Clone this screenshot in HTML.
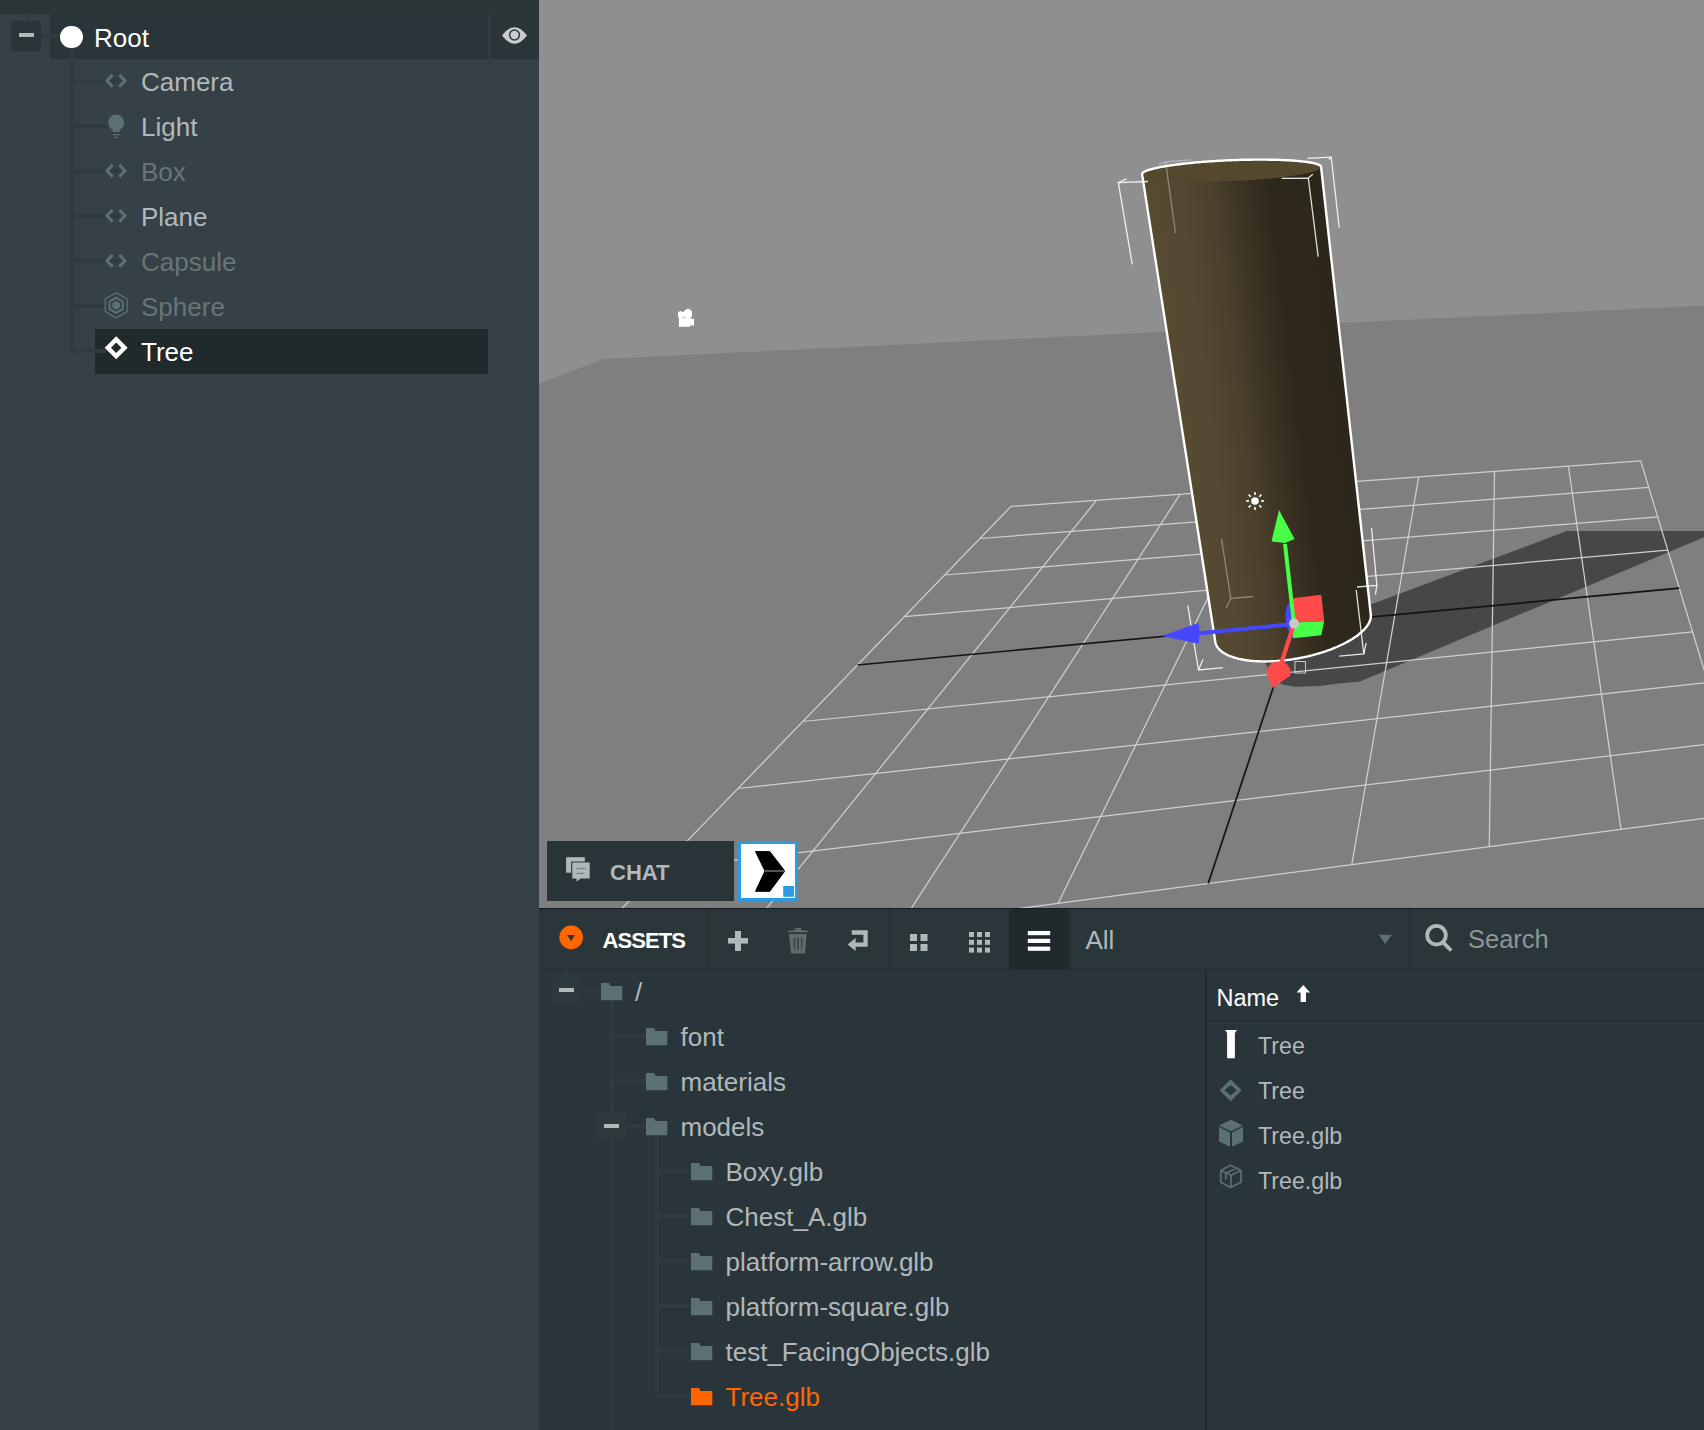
<!DOCTYPE html>
<html><head><meta charset="utf-8">
<style>
*{box-sizing:border-box}
html,body{margin:0;padding:0;width:1704px;height:1430px;overflow:hidden;background:#2a3539;font-family:"Liberation Sans",sans-serif}
.a{position:absolute}
#hier{left:0;top:0;width:539px;height:1430px;background:#354146}
.t{position:absolute;font-size:26px;line-height:30px;white-space:pre;color:#b1b8ba}
.ln{position:absolute;background:#2f3b40}
.vp{position:absolute;left:539px;top:0}
#assets{left:539px;top:908px;width:1165px;height:522px;background:#29353a}
</style></head><body>
<div id="hier" class="a">
  <div class="a" style="left:0;top:0;width:539px;height:14px;background:#2a3538"></div>
  <div class="a" style="left:50px;top:14px;width:489px;height:45px;background:#2a3539"></div>
  <div class="a" style="left:488px;top:14px;width:2px;height:45px;background:#323e42"></div>
  <div class="ln" style="left:25px;top:14px;width:4px;height:7px"></div>
  <div class="a" style="left:11px;top:21px;width:30px;height:30px;background:#2a3539"></div>
  <div class="a" style="left:19px;top:33px;width:15px;height:4px;background:#b1b8ba"></div>
  <div class="ln" style="left:41px;top:34px;width:19px;height:4px"></div>
  <div class="a" style="left:60px;top:25.5px;width:22.6px;height:22.6px;border-radius:50%;background:#fff"></div>
  <div class="t" style="left:94px;top:22.5px;color:#fff">Root</div>
  <svg class="a" style="left:500px;top:25px" width="30" height="22" viewBox="0 0 30 22"><path d="M2,10.5 Q14.5,-6 27,10.5 Q14.5,27 2,10.5Z" fill="#c9cdce"/><circle cx="14.5" cy="10" r="4.9" fill="none" stroke="#2a3539" stroke-width="1.5"/></svg>
  <!-- tree lines -->
  <div class="ln" style="left:70px;top:48px;width:4px;height:306px"></div>
  
  <div class="a" style="left:95px;top:329px;width:393px;height:45px;background:#20292b"></div>
  <div class="ln" style="left:74px;top:79px;width:44px;height:4px"></div>
<div class="ln" style="left:74px;top:124px;width:32px;height:4px"></div>
<div class="ln" style="left:74px;top:169px;width:44px;height:4px"></div>
<div class="ln" style="left:74px;top:214px;width:44px;height:4px"></div>
<div class="ln" style="left:74px;top:259px;width:44px;height:4px"></div>
<div class="ln" style="left:74px;top:304px;width:32px;height:4px"></div>
<div class="ln" style="left:74px;top:349px;width:32px;height:4px"></div>
  <svg class="a" style="left:103px;top:72.5px" width="27" height="16" viewBox="0 0 27 16"><path d="M9.6,1.9 L4,7.8 L9.6,13.7 M16.4,1.9 L22,7.8 L16.4,13.7" fill="none" stroke="#5b7073" stroke-width="3.1"/></svg>
<svg class="a" style="left:106px;top:112px" width="21" height="28" viewBox="106 112 21 28"><circle cx="116.2" cy="122.5" r="8" fill="#5b7073"/><rect x="112.8" y="127" width="7" height="5" fill="#5b7073"/><rect x="112.8" y="134" width="7" height="1.2" fill="#5b7073"/><rect x="114.3" y="136.8" width="4" height="1.2" fill="#5b7073"/></svg>
<svg class="a" style="left:103px;top:162.5px" width="27" height="16" viewBox="0 0 27 16"><path d="M9.6,1.9 L4,7.8 L9.6,13.7 M16.4,1.9 L22,7.8 L16.4,13.7" fill="none" stroke="#5b7073" stroke-width="3.1"/></svg>
<svg class="a" style="left:103px;top:207.5px" width="27" height="16" viewBox="0 0 27 16"><path d="M9.6,1.9 L4,7.8 L9.6,13.7 M16.4,1.9 L22,7.8 L16.4,13.7" fill="none" stroke="#5b7073" stroke-width="3.1"/></svg>
<svg class="a" style="left:103px;top:252.5px" width="27" height="16" viewBox="0 0 27 16"><path d="M9.6,1.9 L4,7.8 L9.6,13.7 M16.4,1.9 L22,7.8 L16.4,13.7" fill="none" stroke="#5b7073" stroke-width="3.1"/></svg>
<svg class="a" style="left:100px;top:288px" width="32" height="36" viewBox="100 288 32 36"><polygon points="116.20,292.70 105.29,299.00 105.29,311.60 116.20,317.90 127.11,311.60 127.11,299.00" fill="none" stroke="#5b7073" stroke-width="1.3"/><polygon points="116.20,297.70 109.62,301.50 109.62,309.10 116.20,312.90 122.78,309.10 122.78,301.50" fill="none" stroke="#5b7073" stroke-width="2"/><polygon points="116.20,300.90 112.39,303.10 112.39,307.50 116.20,309.70 120.01,307.50 120.01,303.10" fill="#5b7073"/></svg>
<svg class="a" style="left:102px;top:334px" width="28" height="28" viewBox="102 334 28 28"><polygon points="116.2,336.3 127.7,347.8 116.2,359.3 104.7,347.8" fill="#fff"/><polygon points="116.2,342.6 121.4,347.8 116.2,353 111,347.8" fill="#20292b"/></svg>
  <div class="t" style="left:141px;top:67px">Camera</div>
  <div class="t" style="left:141px;top:112px">Light</div>
  <div class="t" style="left:141px;top:157px;color:#687577">Box</div>
  <div class="t" style="left:141px;top:202px">Plane</div>
  <div class="t" style="left:141px;top:247px;color:#687577">Capsule</div>
  <div class="t" style="left:141px;top:292px;color:#687577">Sphere</div>
  <div class="t" style="left:141px;top:337px;color:#fff">Tree</div>
</div>
<svg class="vp" width="1165" height="908" viewBox="539 0 1165 908">
<defs>
<linearGradient id="cyl" gradientUnits="userSpaceOnUse" x1="1171" y1="382" x2="1342" y2="360"><stop offset="0" stop-color="#574b32"/><stop offset="0.2" stop-color="#534830"/><stop offset="0.38" stop-color="#4b412c"/><stop offset="0.54" stop-color="#3c3324"/><stop offset="0.7" stop-color="#2f291c"/><stop offset="1" stop-color="#2d271b"/></linearGradient>
</defs>
<rect x="539" y="0" width="1165" height="908" fill="#8f8f8f"/>
<polygon points="539,384 603,359 1704,305.4 1704,908 539,908" fill="#7f7f7f"/>
<polygon points="1250,650 1266,664 1272,678 1282,684.5 1295,686.8 1320,686 1339,683.5 1360,681.5 1704,537.2 1704,531.1 1567,531.1 1370,604.8 1350,612" fill="#474747"/>
<g stroke-width="1.25"><line x1="1011.0" y1="506.4" x2="564.0" y2="968.3" stroke="#cfcfcf"/><line x1="1096.6" y1="500.2" x2="736.5" y2="945.6" stroke="#cfcfcf"/><line x1="1180.2" y1="494.2" x2="901.1" y2="924.0" stroke="#cfcfcf"/><line x1="1261.6" y1="488.3" x2="1058.1" y2="903.3" stroke="#cfcfcf"/><line x1="1341.1" y1="482.5" x2="1294.2" y2="624.2" stroke="#cfcfcf"/><line x1="1418.7" y1="476.9" x2="1351.8" y2="864.7" stroke="#cfcfcf"/><line x1="1494.5" y1="471.5" x2="1489.3" y2="846.6" stroke="#cfcfcf"/><line x1="1568.4" y1="466.1" x2="1621.0" y2="829.3" stroke="#cfcfcf"/><line x1="1640.7" y1="460.9" x2="1747.4" y2="812.7" stroke="#cfcfcf"/><line x1="1011.0" y1="506.4" x2="1640.7" y2="460.9" stroke="#cfcfcf"/><line x1="979.9" y1="538.5" x2="1648.7" y2="487.3" stroke="#cfcfcf"/><line x1="944.6" y1="575.0" x2="1657.7" y2="516.8" stroke="#cfcfcf"/><line x1="904.2" y1="616.7" x2="1667.8" y2="550.2" stroke="#cfcfcf"/><line x1="802.8" y1="721.5" x2="1692.5" y2="631.8" stroke="#cfcfcf"/><line x1="738.0" y1="788.5" x2="1707.9" y2="682.5" stroke="#cfcfcf"/><line x1="659.9" y1="869.2" x2="1725.9" y2="741.9" stroke="#cfcfcf"/><line x1="564.0" y1="968.3" x2="1747.4" y2="812.7" stroke="#cfcfcf"/></g>
<g stroke="#141414" stroke-width="1.7"><line x1="857.5" y1="665.0" x2="1679.3" y2="588.2"/><line x1="1294.2" y1="624.2" x2="1208.2" y2="883.6"/></g>
<path d="M1142.1,174.2 L1142.1,174.0 L1142.1,173.8 L1142.2,173.6 L1142.3,173.5 L1142.4,173.3 L1142.5,173.1 L1142.7,172.9 L1142.9,172.7 L1143.1,172.5 L1143.4,172.3 L1143.6,172.1 L1143.9,172.0 L1144.3,171.8 L1144.6,171.6 L1145.0,171.4 L1145.4,171.2 L1145.9,171.0 L1146.3,170.8 L1146.8,170.6 L1147.3,170.4 L1147.9,170.2 L1148.4,170.0 L1149.0,169.8 L1149.6,169.7 L1150.3,169.5 L1150.9,169.3 L1151.6,169.1 L1152.4,168.9 L1153.1,168.7 L1153.9,168.5 L1154.6,168.3 L1155.5,168.1 L1156.3,168.0 L1157.1,167.8 L1158.0,167.6 L1158.9,167.4 L1159.8,167.2 L1160.8,167.0 L1161.8,166.9 L1162.7,166.7 L1163.8,166.5 L1164.8,166.3 L1165.8,166.1 L1166.9,166.0 L1168.0,165.8 L1169.1,165.6 L1170.2,165.5 L1171.4,165.3 L1172.5,165.1 L1173.7,165.0 L1174.9,164.8 L1176.2,164.6 L1177.4,164.5 L1178.6,164.3 L1179.9,164.2 L1181.2,164.0 L1182.5,163.8 L1183.8,163.7 L1185.1,163.5 L1186.5,163.4 L1187.8,163.3 L1189.2,163.1 L1190.6,163.0 L1192.0,162.8 L1193.4,162.7 L1194.8,162.6 L1196.2,162.4 L1197.7,162.3 L1199.1,162.2 L1200.6,162.1 L1202.1,161.9 L1203.5,161.8 L1205.0,161.7 L1206.5,161.6 L1208.0,161.5 L1209.5,161.4 L1211.1,161.3 L1212.6,161.2 L1214.1,161.1 L1215.6,161.0 L1217.2,160.9 L1218.7,160.8 L1220.3,160.7 L1221.8,160.6 L1223.4,160.6 L1224.9,160.5 L1226.5,160.4 L1228.1,160.3 L1229.6,160.3 L1231.2,160.2 L1232.7,160.1 L1234.3,160.1 L1235.9,160.0 L1237.4,160.0 L1239.0,159.9 L1240.5,159.9 L1242.1,159.8 L1243.6,159.8 L1245.2,159.8 L1246.7,159.7 L1248.3,159.7 L1249.8,159.7 L1251.3,159.7 L1252.9,159.6 L1254.4,159.6 L1255.9,159.6 L1257.4,159.6 L1258.9,159.6 L1260.4,159.6 L1261.8,159.6 L1263.3,159.6 L1264.8,159.6 L1266.2,159.6 L1267.6,159.6 L1269.1,159.7 L1270.5,159.7 L1271.9,159.7 L1273.3,159.7 L1274.6,159.8 L1276.0,159.8 L1277.4,159.8 L1278.7,159.9 L1280.0,159.9 L1281.3,160.0 L1282.6,160.0 L1283.9,160.1 L1285.1,160.1 L1286.4,160.2 L1287.6,160.3 L1288.8,160.3 L1290.0,160.4 L1291.2,160.5 L1292.4,160.5 L1293.5,160.6 L1294.6,160.7 L1295.7,160.8 L1296.8,160.9 L1297.9,161.0 L1298.9,161.1 L1299.9,161.2 L1300.9,161.3 L1301.9,161.4 L1302.8,161.5 L1303.8,161.6 L1304.7,161.7 L1305.6,161.8 L1306.5,161.9 L1307.3,162.0 L1308.1,162.2 L1308.9,162.3 L1309.7,162.4 L1310.5,162.5 L1311.2,162.7 L1311.9,162.8 L1312.6,162.9 L1313.2,163.1 L1313.8,163.2 L1314.5,163.4 L1315.0,163.5 L1315.6,163.7 L1316.1,163.8 L1316.6,164.0 L1317.1,164.1 L1317.5,164.3 L1318.0,164.4 L1318.4,164.6 L1318.7,164.8 L1319.1,164.9 L1319.4,165.1 L1319.7,165.3 L1320.0,165.4 L1320.2,165.6 L1320.4,165.8 L1320.6,165.9 L1320.8,166.1 L1320.9,166.3 L1321.0,166.5 L1321.1,166.6 L1321.1,166.8 L1321.1,167.0 L1370.8,614.6 L1370.8,615.2 L1370.8,615.7 L1370.8,616.3 L1370.8,616.8 L1370.7,617.4 L1370.7,617.9 L1370.6,618.5 L1370.4,619.1 L1370.3,619.6 L1370.1,620.2 L1369.9,620.8 L1369.7,621.3 L1369.4,621.9 L1369.2,622.5 L1368.9,623.1 L1368.6,623.6 L1368.2,624.2 L1367.9,624.8 L1367.5,625.4 L1367.1,626.0 L1366.7,626.6 L1366.2,627.1 L1365.7,627.7 L1365.2,628.3 L1364.7,628.9 L1364.2,629.5 L1363.6,630.1 L1363.0,630.7 L1362.4,631.2 L1361.8,631.8 L1361.2,632.4 L1360.5,633.0 L1359.8,633.6 L1359.1,634.1 L1358.4,634.7 L1357.6,635.3 L1356.9,635.9 L1356.1,636.4 L1355.3,637.0 L1354.4,637.5 L1353.6,638.1 L1352.7,638.7 L1351.9,639.2 L1351.0,639.8 L1350.0,640.3 L1349.1,640.9 L1348.2,641.4 L1347.2,641.9 L1346.2,642.5 L1345.2,643.0 L1344.2,643.5 L1343.2,644.0 L1342.1,644.5 L1341.1,645.0 L1340.0,645.5 L1338.9,646.0 L1337.8,646.5 L1336.7,647.0 L1335.5,647.5 L1334.4,648.0 L1333.2,648.4 L1332.1,648.9 L1330.9,649.3 L1329.7,649.8 L1328.5,650.2 L1327.3,650.7 L1326.1,651.1 L1324.8,651.5 L1323.6,651.9 L1322.3,652.3 L1321.1,652.7 L1319.8,653.1 L1318.5,653.5 L1317.2,653.9 L1315.9,654.2 L1314.6,654.6 L1313.3,654.9 L1312.0,655.3 L1310.7,655.6 L1309.4,655.9 L1308.0,656.3 L1306.7,656.6 L1305.3,656.9 L1304.0,657.2 L1302.7,657.4 L1301.3,657.7 L1300.0,658.0 L1298.6,658.2 L1297.2,658.5 L1295.9,658.7 L1294.5,658.9 L1293.2,659.2 L1291.8,659.4 L1290.5,659.6 L1289.1,659.8 L1287.7,659.9 L1286.4,660.1 L1285.0,660.3 L1283.7,660.4 L1282.3,660.6 L1281.0,660.7 L1279.7,660.8 L1278.3,660.9 L1277.0,661.0 L1275.7,661.1 L1274.3,661.2 L1273.0,661.3 L1271.7,661.3 L1270.4,661.4 L1269.1,661.4 L1267.8,661.4 L1266.5,661.4 L1265.3,661.5 L1264.0,661.5 L1262.7,661.4 L1261.5,661.4 L1260.3,661.4 L1259.0,661.3 L1257.8,661.3 L1256.6,661.2 L1255.4,661.1 L1254.2,661.1 L1253.1,661.0 L1251.9,660.9 L1250.7,660.8 L1249.6,660.6 L1248.5,660.5 L1247.4,660.4 L1246.3,660.2 L1245.2,660.0 L1244.1,659.9 L1243.1,659.7 L1242.1,659.5 L1241.0,659.3 L1240.0,659.1 L1239.1,658.9 L1238.1,658.6 L1237.1,658.4 L1236.2,658.1 L1235.3,657.9 L1234.4,657.6 L1233.5,657.3 L1232.6,657.0 L1231.8,656.7 L1230.9,656.4 L1230.1,656.1 L1229.3,655.8 L1228.6,655.5 L1227.8,655.1 L1227.1,654.8 L1226.4,654.4 L1225.7,654.1 L1225.0,653.7 L1224.4,653.3 L1223.7,652.9 L1223.1,652.6 L1222.5,652.2 L1222.0,651.7 L1221.4,651.3 L1220.9,650.9 L1220.4,650.5 L1219.9,650.0 L1219.5,649.6 L1219.0,649.1 L1218.6,648.7 L1218.2,648.2 L1217.9,647.8 L1217.5,647.3 L1217.2,646.8 L1216.9,646.3 L1216.6,645.8 L1216.4,645.3 L1216.1,644.8 L1215.9,644.3 L1215.8,643.8 L1215.6,643.3 L1215.5,642.8 L1215.4,642.2 L1215.3,641.7 L1142.1,174.4Z" fill="url(#cyl)"/>
<path d="M1321.1,167.0 L1321.1,167.2 L1321.1,167.4 L1321.0,167.6 L1320.9,167.7 L1320.8,167.9 L1320.7,168.1 L1320.5,168.3 L1320.3,168.5 L1320.1,168.7 L1319.8,168.9 L1319.6,169.1 L1319.3,169.2 L1318.9,169.4 L1318.6,169.6 L1318.2,169.8 L1317.8,170.0 L1317.3,170.2 L1316.9,170.4 L1316.4,170.6 L1315.9,170.8 L1315.3,171.0 L1314.8,171.2 L1314.2,171.4 L1313.6,171.5 L1312.9,171.7 L1312.3,171.9 L1311.6,172.1 L1310.8,172.3 L1310.1,172.5 L1309.3,172.7 L1308.6,172.9 L1307.7,173.1 L1306.9,173.2 L1306.1,173.4 L1305.2,173.6 L1304.3,173.8 L1303.4,174.0 L1302.4,174.2 L1301.4,174.3 L1300.5,174.5 L1299.4,174.7 L1298.4,174.9 L1297.4,175.1 L1296.3,175.2 L1295.2,175.4 L1294.1,175.6 L1293.0,175.7 L1291.8,175.9 L1290.7,176.1 L1289.5,176.2 L1288.3,176.4 L1287.0,176.6 L1285.8,176.7 L1284.6,176.9 L1283.3,177.0 L1282.0,177.2 L1280.7,177.4 L1279.4,177.5 L1278.1,177.7 L1276.7,177.8 L1275.4,177.9 L1274.0,178.1 L1272.6,178.2 L1271.2,178.4 L1269.8,178.5 L1268.4,178.6 L1267.0,178.8 L1265.5,178.9 L1264.1,179.0 L1262.6,179.1 L1261.1,179.3 L1259.7,179.4 L1258.2,179.5 L1256.7,179.6 L1255.2,179.7 L1253.7,179.8 L1252.1,179.9 L1250.6,180.0 L1249.1,180.1 L1247.6,180.2 L1246.0,180.3 L1244.5,180.4 L1242.9,180.5 L1241.4,180.6 L1239.8,180.6 L1238.3,180.7 L1236.7,180.8 L1235.1,180.9 L1233.6,180.9 L1232.0,181.0 L1230.5,181.1 L1228.9,181.1 L1227.3,181.2 L1225.8,181.2 L1224.2,181.3 L1222.7,181.3 L1221.1,181.4 L1219.6,181.4 L1218.0,181.4 L1216.5,181.5 L1214.9,181.5 L1213.4,181.5 L1211.9,181.5 L1210.3,181.6 L1208.8,181.6 L1207.3,181.6 L1205.8,181.6 L1204.3,181.6 L1202.8,181.6 L1201.4,181.6 L1199.9,181.6 L1198.4,181.6 L1197.0,181.6 L1195.6,181.6 L1194.1,181.5 L1192.7,181.5 L1191.3,181.5 L1189.9,181.5 L1188.6,181.4 L1187.2,181.4 L1185.8,181.4 L1184.5,181.3 L1183.2,181.3 L1181.9,181.2 L1180.6,181.2 L1179.3,181.1 L1178.1,181.1 L1176.8,181.0 L1175.6,180.9 L1174.4,180.9 L1173.2,180.8 L1172.0,180.7 L1170.8,180.7 L1169.7,180.6 L1168.6,180.5 L1167.5,180.4 L1166.4,180.3 L1165.3,180.2 L1164.3,180.1 L1163.3,180.0 L1162.3,179.9 L1161.3,179.8 L1160.4,179.7 L1159.4,179.6 L1158.5,179.5 L1157.6,179.4 L1156.7,179.3 L1155.9,179.2 L1155.1,179.0 L1154.3,178.9 L1153.5,178.8 L1152.7,178.7 L1152.0,178.5 L1151.3,178.4 L1150.6,178.3 L1150.0,178.1 L1149.4,178.0 L1148.7,177.8 L1148.2,177.7 L1147.6,177.5 L1147.1,177.4 L1146.6,177.2 L1146.1,177.1 L1145.7,176.9 L1145.2,176.8 L1144.8,176.6 L1144.5,176.4 L1144.1,176.3 L1143.8,176.1 L1143.5,175.9 L1143.2,175.8 L1143.0,175.6 L1142.8,175.4 L1142.6,175.3 L1142.4,175.1 L1142.3,174.9 L1142.2,174.7 L1142.1,174.6 L1142.1,174.4 L1142.1,174.2 L1142.1,174.0 L1142.1,173.8 L1142.2,173.6 L1142.3,173.5 L1142.4,173.3 L1142.5,173.1 L1142.7,172.9 L1142.9,172.7 L1143.1,172.5 L1143.4,172.3 L1143.6,172.1 L1143.9,172.0 L1144.3,171.8 L1144.6,171.6 L1145.0,171.4 L1145.4,171.2 L1145.9,171.0 L1146.3,170.8 L1146.8,170.6 L1147.3,170.4 L1147.9,170.2 L1148.4,170.0 L1149.0,169.8 L1149.6,169.7 L1150.3,169.5 L1150.9,169.3 L1151.6,169.1 L1152.4,168.9 L1153.1,168.7 L1153.9,168.5 L1154.6,168.3 L1155.5,168.1 L1156.3,168.0 L1157.1,167.8 L1158.0,167.6 L1158.9,167.4 L1159.8,167.2 L1160.8,167.0 L1161.8,166.9 L1162.7,166.7 L1163.8,166.5 L1164.8,166.3 L1165.8,166.1 L1166.9,166.0 L1168.0,165.8 L1169.1,165.6 L1170.2,165.5 L1171.4,165.3 L1172.5,165.1 L1173.7,165.0 L1174.9,164.8 L1176.2,164.6 L1177.4,164.5 L1178.6,164.3 L1179.9,164.2 L1181.2,164.0 L1182.5,163.8 L1183.8,163.7 L1185.1,163.5 L1186.5,163.4 L1187.8,163.3 L1189.2,163.1 L1190.6,163.0 L1192.0,162.8 L1193.4,162.7 L1194.8,162.6 L1196.2,162.4 L1197.7,162.3 L1199.1,162.2 L1200.6,162.1 L1202.1,161.9 L1203.5,161.8 L1205.0,161.7 L1206.5,161.6 L1208.0,161.5 L1209.5,161.4 L1211.1,161.3 L1212.6,161.2 L1214.1,161.1 L1215.6,161.0 L1217.2,160.9 L1218.7,160.8 L1220.3,160.7 L1221.8,160.6 L1223.4,160.6 L1224.9,160.5 L1226.5,160.4 L1228.1,160.3 L1229.6,160.3 L1231.2,160.2 L1232.7,160.1 L1234.3,160.1 L1235.9,160.0 L1237.4,160.0 L1239.0,159.9 L1240.5,159.9 L1242.1,159.8 L1243.6,159.8 L1245.2,159.8 L1246.7,159.7 L1248.3,159.7 L1249.8,159.7 L1251.3,159.7 L1252.9,159.6 L1254.4,159.6 L1255.9,159.6 L1257.4,159.6 L1258.9,159.6 L1260.4,159.6 L1261.8,159.6 L1263.3,159.6 L1264.8,159.6 L1266.2,159.6 L1267.6,159.6 L1269.1,159.7 L1270.5,159.7 L1271.9,159.7 L1273.3,159.7 L1274.6,159.8 L1276.0,159.8 L1277.4,159.8 L1278.7,159.9 L1280.0,159.9 L1281.3,160.0 L1282.6,160.0 L1283.9,160.1 L1285.1,160.1 L1286.4,160.2 L1287.6,160.3 L1288.8,160.3 L1290.0,160.4 L1291.2,160.5 L1292.4,160.5 L1293.5,160.6 L1294.6,160.7 L1295.7,160.8 L1296.8,160.9 L1297.9,161.0 L1298.9,161.1 L1299.9,161.2 L1300.9,161.3 L1301.9,161.4 L1302.8,161.5 L1303.8,161.6 L1304.7,161.7 L1305.6,161.8 L1306.5,161.9 L1307.3,162.0 L1308.1,162.2 L1308.9,162.3 L1309.7,162.4 L1310.5,162.5 L1311.2,162.7 L1311.9,162.8 L1312.6,162.9 L1313.2,163.1 L1313.8,163.2 L1314.5,163.4 L1315.0,163.5 L1315.6,163.7 L1316.1,163.8 L1316.6,164.0 L1317.1,164.1 L1317.5,164.3 L1318.0,164.4 L1318.4,164.6 L1318.7,164.8 L1319.1,164.9 L1319.4,165.1 L1319.7,165.3 L1320.0,165.4 L1320.2,165.6 L1320.4,165.8 L1320.6,165.9 L1320.8,166.1 L1320.9,166.3 L1321.0,166.5 L1321.1,166.6 L1321.1,166.8Z" fill="#54482f"/>
<path d="M1142.1,174.2 L1142.1,174.0 L1142.1,173.8 L1142.2,173.6 L1142.3,173.5 L1142.4,173.3 L1142.5,173.1 L1142.7,172.9 L1142.9,172.7 L1143.1,172.5 L1143.4,172.3 L1143.6,172.1 L1143.9,172.0 L1144.3,171.8 L1144.6,171.6 L1145.0,171.4 L1145.4,171.2 L1145.9,171.0 L1146.3,170.8 L1146.8,170.6 L1147.3,170.4 L1147.9,170.2 L1148.4,170.0 L1149.0,169.8 L1149.6,169.7 L1150.3,169.5 L1150.9,169.3 L1151.6,169.1 L1152.4,168.9 L1153.1,168.7 L1153.9,168.5 L1154.6,168.3 L1155.5,168.1 L1156.3,168.0 L1157.1,167.8 L1158.0,167.6 L1158.9,167.4 L1159.8,167.2 L1160.8,167.0 L1161.8,166.9 L1162.7,166.7 L1163.8,166.5 L1164.8,166.3 L1165.8,166.1 L1166.9,166.0 L1168.0,165.8 L1169.1,165.6 L1170.2,165.5 L1171.4,165.3 L1172.5,165.1 L1173.7,165.0 L1174.9,164.8 L1176.2,164.6 L1177.4,164.5 L1178.6,164.3 L1179.9,164.2 L1181.2,164.0 L1182.5,163.8 L1183.8,163.7 L1185.1,163.5 L1186.5,163.4 L1187.8,163.3 L1189.2,163.1 L1190.6,163.0 L1192.0,162.8 L1193.4,162.7 L1194.8,162.6 L1196.2,162.4 L1197.7,162.3 L1199.1,162.2 L1200.6,162.1 L1202.1,161.9 L1203.5,161.8 L1205.0,161.7 L1206.5,161.6 L1208.0,161.5 L1209.5,161.4 L1211.1,161.3 L1212.6,161.2 L1214.1,161.1 L1215.6,161.0 L1217.2,160.9 L1218.7,160.8 L1220.3,160.7 L1221.8,160.6 L1223.4,160.6 L1224.9,160.5 L1226.5,160.4 L1228.1,160.3 L1229.6,160.3 L1231.2,160.2 L1232.7,160.1 L1234.3,160.1 L1235.9,160.0 L1237.4,160.0 L1239.0,159.9 L1240.5,159.9 L1242.1,159.8 L1243.6,159.8 L1245.2,159.8 L1246.7,159.7 L1248.3,159.7 L1249.8,159.7 L1251.3,159.7 L1252.9,159.6 L1254.4,159.6 L1255.9,159.6 L1257.4,159.6 L1258.9,159.6 L1260.4,159.6 L1261.8,159.6 L1263.3,159.6 L1264.8,159.6 L1266.2,159.6 L1267.6,159.6 L1269.1,159.7 L1270.5,159.7 L1271.9,159.7 L1273.3,159.7 L1274.6,159.8 L1276.0,159.8 L1277.4,159.8 L1278.7,159.9 L1280.0,159.9 L1281.3,160.0 L1282.6,160.0 L1283.9,160.1 L1285.1,160.1 L1286.4,160.2 L1287.6,160.3 L1288.8,160.3 L1290.0,160.4 L1291.2,160.5 L1292.4,160.5 L1293.5,160.6 L1294.6,160.7 L1295.7,160.8 L1296.8,160.9 L1297.9,161.0 L1298.9,161.1 L1299.9,161.2 L1300.9,161.3 L1301.9,161.4 L1302.8,161.5 L1303.8,161.6 L1304.7,161.7 L1305.6,161.8 L1306.5,161.9 L1307.3,162.0 L1308.1,162.2 L1308.9,162.3 L1309.7,162.4 L1310.5,162.5 L1311.2,162.7 L1311.9,162.8 L1312.6,162.9 L1313.2,163.1 L1313.8,163.2 L1314.5,163.4 L1315.0,163.5 L1315.6,163.7 L1316.1,163.8 L1316.6,164.0 L1317.1,164.1 L1317.5,164.3 L1318.0,164.4 L1318.4,164.6 L1318.7,164.8 L1319.1,164.9 L1319.4,165.1 L1319.7,165.3 L1320.0,165.4 L1320.2,165.6 L1320.4,165.8 L1320.6,165.9 L1320.8,166.1 L1320.9,166.3 L1321.0,166.5 L1321.1,166.6 L1321.1,166.8 L1321.1,167.0 L1370.8,614.6 L1370.8,615.2 L1370.8,615.7 L1370.8,616.3 L1370.8,616.8 L1370.7,617.4 L1370.7,617.9 L1370.6,618.5 L1370.4,619.1 L1370.3,619.6 L1370.1,620.2 L1369.9,620.8 L1369.7,621.3 L1369.4,621.9 L1369.2,622.5 L1368.9,623.1 L1368.6,623.6 L1368.2,624.2 L1367.9,624.8 L1367.5,625.4 L1367.1,626.0 L1366.7,626.6 L1366.2,627.1 L1365.7,627.7 L1365.2,628.3 L1364.7,628.9 L1364.2,629.5 L1363.6,630.1 L1363.0,630.7 L1362.4,631.2 L1361.8,631.8 L1361.2,632.4 L1360.5,633.0 L1359.8,633.6 L1359.1,634.1 L1358.4,634.7 L1357.6,635.3 L1356.9,635.9 L1356.1,636.4 L1355.3,637.0 L1354.4,637.5 L1353.6,638.1 L1352.7,638.7 L1351.9,639.2 L1351.0,639.8 L1350.0,640.3 L1349.1,640.9 L1348.2,641.4 L1347.2,641.9 L1346.2,642.5 L1345.2,643.0 L1344.2,643.5 L1343.2,644.0 L1342.1,644.5 L1341.1,645.0 L1340.0,645.5 L1338.9,646.0 L1337.8,646.5 L1336.7,647.0 L1335.5,647.5 L1334.4,648.0 L1333.2,648.4 L1332.1,648.9 L1330.9,649.3 L1329.7,649.8 L1328.5,650.2 L1327.3,650.7 L1326.1,651.1 L1324.8,651.5 L1323.6,651.9 L1322.3,652.3 L1321.1,652.7 L1319.8,653.1 L1318.5,653.5 L1317.2,653.9 L1315.9,654.2 L1314.6,654.6 L1313.3,654.9 L1312.0,655.3 L1310.7,655.6 L1309.4,655.9 L1308.0,656.3 L1306.7,656.6 L1305.3,656.9 L1304.0,657.2 L1302.7,657.4 L1301.3,657.7 L1300.0,658.0 L1298.6,658.2 L1297.2,658.5 L1295.9,658.7 L1294.5,658.9 L1293.2,659.2 L1291.8,659.4 L1290.5,659.6 L1289.1,659.8 L1287.7,659.9 L1286.4,660.1 L1285.0,660.3 L1283.7,660.4 L1282.3,660.6 L1281.0,660.7 L1279.7,660.8 L1278.3,660.9 L1277.0,661.0 L1275.7,661.1 L1274.3,661.2 L1273.0,661.3 L1271.7,661.3 L1270.4,661.4 L1269.1,661.4 L1267.8,661.4 L1266.5,661.4 L1265.3,661.5 L1264.0,661.5 L1262.7,661.4 L1261.5,661.4 L1260.3,661.4 L1259.0,661.3 L1257.8,661.3 L1256.6,661.2 L1255.4,661.1 L1254.2,661.1 L1253.1,661.0 L1251.9,660.9 L1250.7,660.8 L1249.6,660.6 L1248.5,660.5 L1247.4,660.4 L1246.3,660.2 L1245.2,660.0 L1244.1,659.9 L1243.1,659.7 L1242.1,659.5 L1241.0,659.3 L1240.0,659.1 L1239.1,658.9 L1238.1,658.6 L1237.1,658.4 L1236.2,658.1 L1235.3,657.9 L1234.4,657.6 L1233.5,657.3 L1232.6,657.0 L1231.8,656.7 L1230.9,656.4 L1230.1,656.1 L1229.3,655.8 L1228.6,655.5 L1227.8,655.1 L1227.1,654.8 L1226.4,654.4 L1225.7,654.1 L1225.0,653.7 L1224.4,653.3 L1223.7,652.9 L1223.1,652.6 L1222.5,652.2 L1222.0,651.7 L1221.4,651.3 L1220.9,650.9 L1220.4,650.5 L1219.9,650.0 L1219.5,649.6 L1219.0,649.1 L1218.6,648.7 L1218.2,648.2 L1217.9,647.8 L1217.5,647.3 L1217.2,646.8 L1216.9,646.3 L1216.6,645.8 L1216.4,645.3 L1216.1,644.8 L1215.9,644.3 L1215.8,643.8 L1215.6,643.3 L1215.5,642.8 L1215.4,642.2 L1215.3,641.7 L1142.1,174.4Z" fill="none" stroke="#fff" stroke-width="2.4" stroke-linejoin="round"/>
<polyline points="1148,181.5 1118.3,182.7 1132.3,264.4" fill="none" stroke="rgba(255,255,255,0.85)" stroke-width="1.3"/>
<polyline points="1118.3,182.7 1126.7,178.9" fill="none" stroke="rgba(255,255,255,0.85)" stroke-width="1.3"/>
<polyline points="1190.8,159.8 1165.6,161.8 1175.5,233" fill="none" stroke="rgba(255,255,255,0.35)" stroke-width="1.3"/>
<polyline points="1165.6,161.8 1159.2,164.1" fill="none" stroke="rgba(255,255,255,0.35)" stroke-width="1.3"/>
<polyline points="1307.5,158.3 1331.2,157.1 1339.2,227.7" fill="none" stroke="rgba(255,255,255,0.85)" stroke-width="1.3"/>
<polyline points="1331.2,157.1 1328.9,159.8" fill="none" stroke="rgba(255,255,255,0.85)" stroke-width="1.3"/>
<polyline points="1281.6,178.4 1308.3,178.1 1318.2,256.7" fill="none" stroke="rgba(255,255,255,0.85)" stroke-width="1.3"/>
<polyline points="1308.3,178.1 1312.8,174.3" fill="none" stroke="rgba(255,255,255,0.85)" stroke-width="1.3"/>
<polyline points="1223,667.7 1198.5,670 1187.7,605.4" fill="none" stroke="rgba(255,255,255,0.85)" stroke-width="1.3"/>
<polyline points="1198.5,670 1203,659.2" fill="none" stroke="rgba(255,255,255,0.85)" stroke-width="1.3"/>
<polyline points="1253,596.5 1230.8,598.5 1221.5,539.2" fill="none" stroke="rgba(255,255,255,0.35)" stroke-width="1.3"/>
<polyline points="1230.8,598.5 1226,608.5" fill="none" stroke="rgba(255,255,255,0.35)" stroke-width="1.3"/>
<polyline points="1339.2,656.2 1363.8,653.8 1356.2,590" fill="none" stroke="rgba(255,255,255,0.85)" stroke-width="1.3"/>
<polyline points="1363.8,653.8 1366.2,643" fill="none" stroke="rgba(255,255,255,0.85)" stroke-width="1.3"/>
<polyline points="1357,587 1376.9,585.4 1371.5,527.7" fill="none" stroke="rgba(255,255,255,0.85)" stroke-width="1.3"/>
<polyline points="1376.9,585.4 1375.4,594.6" fill="none" stroke="rgba(255,255,255,0.85)" stroke-width="1.3"/>
<g>
<polygon points="1293,598.2 1321.3,594.7 1324.2,621.2 1293,622.6" fill="#ff4a4a"/>
<polygon points="1293,622.6 1324.2,621.2 1321.3,635.3 1293,638.3" fill="#46ff46"/>
<polygon points="1293,598.2 1287,606 1285,615 1287,628 1293,638.3" fill="#4646ff"/>
<line x1="1294" y1="624" x2="1199" y2="633.3" stroke="#4646ff" stroke-width="4"/>
<polygon points="1162,636 1198.5,622.8 1200,633 1198.5,643.8" fill="#4646ff"/>
<line x1="1294" y1="624" x2="1285" y2="544" stroke="#46ff46" stroke-width="4"/>
<polygon points="1279,510 1271.5,541.5 1285,543 1294.6,539" fill="#46ff46"/>
<line x1="1294" y1="624" x2="1281" y2="664" stroke="#ff4a4a" stroke-width="4.2"/>
<path d="M1272.3,688 L1267,675 A12,11 0 1 1 1290,676 Z" fill="#ff4a4a"/>
<circle cx="1294" cy="623.6" r="5" fill="#c8c8c8"/>
</g>
<rect x="1295" y="661.5" width="10.5" height="11.5" fill="none" stroke="rgba(255,255,255,0.7)" stroke-width="1"/>
<circle cx="1255" cy="501" r="3.8" fill="#fff"/><g stroke="#fff" stroke-width="1.6"><line x1="1261.0" y1="501.0" x2="1264.0" y2="501.0"/><line x1="1259.2" y1="505.2" x2="1261.4" y2="507.4"/><line x1="1255.0" y1="507.0" x2="1255.0" y2="510.0"/><line x1="1250.8" y1="505.2" x2="1248.6" y2="507.4"/><line x1="1249.0" y1="501.0" x2="1246.0" y2="501.0"/><line x1="1250.8" y1="496.8" x2="1248.6" y2="494.6"/><line x1="1255.0" y1="495.0" x2="1255.0" y2="492.0"/><line x1="1259.2" y1="496.8" x2="1261.4" y2="494.6"/></g>
<path d="M678,312.3 L680.5,310.8 L682.7,312.3 L685.5,310 L688,308.6 L690.5,309.8 L692,311.3 V315.9 L690.3,318.3 L690.8,318.8 H694 V325.6 H690.8 L690.2,324.4 V326.8 H678.9 V318 L678,317Z" fill="#fff"/><path d="M682.3,318.2 H686 L684.3,316.6Z" fill="#bbb"/>
</svg>
<!-- chat -->
<div class="a" style="left:547px;top:841px;width:187px;height:60px;background:#293539"></div>
<svg class="a" style="left:560px;top:850px" width="40" height="40" viewBox="560 850 40 40"><rect x="566.1" y="857.2" width="18.7" height="15.5" fill="#b1b8ba"/><path d="M571.7,862 H590.2 V879 H581 L576,882.6 V879 H571.7Z" fill="#b1b8ba" stroke="#293539" stroke-width="1.1"/><rect x="576.4" y="867.9" width="9.6" height="1.3" fill="#7b8486"/><rect x="576.4" y="872.8" width="7.6" height="1.3" fill="#7b8486"/></svg>
<div class="a" style="left:610px;top:860.5px;font-size:22px;font-weight:700;color:#b1b8ba;line-height:24px">CHAT</div>
<div class="a" style="left:738px;top:841px;width:60px;height:60px;background:#fff;border:3.5px solid #2b9be3"></div>
<svg class="a" style="left:741px;top:844px" width="54" height="54" viewBox="0 0 54 54"><path d="M14.5,7.6 H28.8 L43.8,27 L28.8,47.3 H14.5 L24,27Z" fill="#000" stroke="#000" stroke-width="1" stroke-linejoin="round"/><line x1="24" y1="27" x2="43.8" y2="27" stroke="#8a8a8a" stroke-width="1.2"/><rect x="42.2" y="42" width="10.8" height="10.8" fill="#2b9be3"/></svg>
<div id="assets" class="a">
<div class="a" style="left:0;top:0;width:1165px;height:1.6px;background:#12181b"></div>
<div class="a" style="left:0;top:1px;width:1165px;height:60px;background:#2b363a"></div>
<div class="a" style="left:0;top:61px;width:1165px;height:1px;background:#222b2e"></div>
<svg class="a" style="left:20px;top:17px" width="25" height="25" viewBox="0 0 25 25"><circle cx="12.2" cy="12.4" r="11.8" fill="#ff6600"/><polygon points="8.1,10 15.9,10 12.3,16.2" fill="#293538"/></svg>
<div class="a" style="left:63.5px;top:21.88px;font-size:22px;line-height:1;white-space:pre;color:#fff;font-weight:700;letter-spacing:-0.9px">ASSETS</div>
<div class="a" style="left:168.6px;top:1px;width:1px;height:60px;background:#222b2e"></div>
<div class="a" style="left:349.5px;top:1px;width:1px;height:60px;background:#222b2e"></div>
<div class="a" style="left:530.5px;top:1px;width:1px;height:60px;background:#222b2e"></div>
<svg class="a" style="left:188px;top:22px" width="22" height="22" viewBox="0 0 22 22"><rect x="8" y="1" width="6" height="20" fill="#b1b8ba"/><rect x="1" y="8" width="20" height="5.6" fill="#b1b8ba"/></svg>
<svg class="a" style="left:0;top:0" width="1165" height="100" viewBox="539 908 1165 100"><g fill="#5f6a6d"><rect x="795.4" y="928" width="5.5" height="2.5"/><path d="M795.4,930 L787.8,931 V932.3 H808.2 V931 L800.9,930Z"/><path d="M788.9,934.1 H806.6 L805,953.5 H791Z"/></g><g fill="#3b4649"><path d="M793.6,938.1 h1.8 l-0.3,11.6 h-1.2Z"/><rect x="797.1" y="938.1" width="1.8" height="11.6"/><path d="M800.8,938.1 h1.8 l-0.3,11.6 h-1.2Z"/></g><path d="M851.8,930.2 H867.7 V946.8 H855.6 V951 L847.6,944.5 L855.6,938.1 V942.5 H863.4 V934.8 H851.8Z" fill="#b1b8ba"/></svg>
<svg class="a" style="left:370px;top:25px" width="20" height="19" viewBox="0 0 20 19"><rect x="1" y="1" width="7" height="7" fill="#b1b8ba"/><rect x="11.5" y="1" width="7" height="7" fill="#b1b8ba"/><rect x="1" y="11" width="7" height="7" fill="#b1b8ba"/><rect x="11.5" y="11" width="7" height="7" fill="#b1b8ba"/></svg>
<svg class="a" style="left:429px;top:23px" width="24" height="23" viewBox="0 0 24 23"><rect x="1" y="1.0" width="5" height="5" fill="#b1b8ba"/><rect x="1" y="8.8" width="5" height="5" fill="#b1b8ba"/><rect x="1" y="16.6" width="5" height="5" fill="#b1b8ba"/><rect x="9" y="1.0" width="5" height="5" fill="#b1b8ba"/><rect x="9" y="8.8" width="5" height="5" fill="#b1b8ba"/><rect x="9" y="16.6" width="5" height="5" fill="#b1b8ba"/><rect x="17" y="1.0" width="5" height="5" fill="#b1b8ba"/><rect x="17" y="8.8" width="5" height="5" fill="#b1b8ba"/><rect x="17" y="16.6" width="5" height="5" fill="#b1b8ba"/></svg>
<div class="a" style="left:470px;top:1px;width:60px;height:60px;background:#20292b;border-radius:4px"></div>
<svg class="a" style="left:488px;top:22px" width="24" height="22" viewBox="0 0 24 22"><rect x="0.8" y="1" width="22.4" height="4.2" fill="#fff"/><rect x="0.8" y="8.8" width="22.4" height="4.2" fill="#fff"/><rect x="0.8" y="16.6" width="22.4" height="4.2" fill="#fff"/></svg>
<div class="a" style="left:546.5px;top:19.49px;font-size:26px;line-height:1;white-space:pre;color:#b1b8ba;font-weight:400;">All</div>
<svg class="a" style="left:839px;top:26px" width="15" height="11" viewBox="0 0 15 11"><polygon points="0.8,0.8 13.8,0.8 7.3,10" fill="#5b7073"/></svg>
<div class="a" style="left:869.5px;top:1px;width:1px;height:60px;background:#222b2e"></div>
<svg class="a" style="left:885px;top:16px" width="30" height="30" viewBox="0 0 30 30"><circle cx="12.5" cy="11.2" r="9.3" fill="none" stroke="#b1b8ba" stroke-width="3.8"/><line x1="19" y1="18.3" x2="27.2" y2="26.5" stroke="#b1b8ba" stroke-width="3.8"/></svg>
<div class="a" style="left:929px;top:19.41px;font-size:25.5px;line-height:1;white-space:pre;color:#8c9597;font-weight:400;">Search</div>
<div class="ln" style="left:26.4px;top:62px;width:3.5px;height:7px;background:#2f3b3f"></div>
<div class="ln" style="left:71px;top:92px;width:4px;height:430px;background:#2f3b3f"></div>
<div class="ln" style="left:116.3px;top:227px;width:4px;height:262px;background:#2f3b3f"></div>
<div class="ln" style="left:42px;top:81px;width:20px;height:4px;background:#2f3b3f"></div>
<div class="a" style="left:12px;top:68.7px;width:30px;height:28.5px;background:#2e393d"></div>
<div class="a" style="left:20px;top:79.8px;width:15px;height:4.5px;background:#b1b8ba"></div>
<svg class="a" style="left:61.7px;top:74.7px" width="22" height="18" viewBox="0 0 22 18"><path d="M0,0 H8 L9.5,3 H21.3 V17.3 H0Z" fill="#5b7073"/></svg>
<div class="a" style="left:96px;top:70.69px;font-size:26px;line-height:1;white-space:pre;color:#b1b8ba;font-weight:400;">/</div>
<div class="ln" style="left:75px;top:125.69999999999999px;width:32px;height:4px;background:#2f3b3f"></div>
<svg class="a" style="left:106.6px;top:119.69999999999999px" width="22" height="18" viewBox="0 0 22 18"><path d="M0,0 H8 L9.5,3 H21.3 V17.3 H0Z" fill="#5b7073"/></svg>
<div class="a" style="left:141.5px;top:115.69px;font-size:26px;line-height:1;white-space:pre;color:#b1b8ba;font-weight:400;">font</div>
<div class="ln" style="left:75px;top:170.7px;width:32px;height:4px;background:#2f3b3f"></div>
<svg class="a" style="left:106.6px;top:164.7px" width="22" height="18" viewBox="0 0 22 18"><path d="M0,0 H8 L9.5,3 H21.3 V17.3 H0Z" fill="#5b7073"/></svg>
<div class="a" style="left:141.5px;top:160.69px;font-size:26px;line-height:1;white-space:pre;color:#b1b8ba;font-weight:400;">materials</div>
<div class="ln" style="left:86.7px;top:215.7px;width:20px;height:4px;background:#2f3b3f"></div>
<div class="a" style="left:57px;top:202.8px;width:29.7px;height:29.6px;background:#2e393d"></div>
<div class="a" style="left:65px;top:215.5px;width:15px;height:4.5px;background:#b1b8ba"></div>
<svg class="a" style="left:106.6px;top:209.7px" width="22" height="18" viewBox="0 0 22 18"><path d="M0,0 H8 L9.5,3 H21.3 V17.3 H0Z" fill="#5b7073"/></svg>
<div class="a" style="left:141.5px;top:205.69px;font-size:26px;line-height:1;white-space:pre;color:#b1b8ba;font-weight:400;">models</div>
<div class="ln" style="left:120.4px;top:260.7px;width:32px;height:4px;background:#2f3b3f"></div>
<svg class="a" style="left:151.9px;top:254.7px" width="22" height="18" viewBox="0 0 22 18"><path d="M0,0 H8 L9.5,3 H21.3 V17.3 H0Z" fill="#5b7073"/></svg>
<div class="a" style="left:186.5px;top:250.69px;font-size:26px;line-height:1;white-space:pre;color:#b1b8ba;font-weight:400;">Boxy.glb</div>
<div class="ln" style="left:120.4px;top:305.7px;width:32px;height:4px;background:#2f3b3f"></div>
<svg class="a" style="left:151.9px;top:299.7px" width="22" height="18" viewBox="0 0 22 18"><path d="M0,0 H8 L9.5,3 H21.3 V17.3 H0Z" fill="#5b7073"/></svg>
<div class="a" style="left:186.5px;top:295.69px;font-size:26px;line-height:1;white-space:pre;color:#b1b8ba;font-weight:400;">Chest_A.glb</div>
<div class="ln" style="left:120.4px;top:350.7px;width:32px;height:4px;background:#2f3b3f"></div>
<svg class="a" style="left:151.9px;top:344.7px" width="22" height="18" viewBox="0 0 22 18"><path d="M0,0 H8 L9.5,3 H21.3 V17.3 H0Z" fill="#5b7073"/></svg>
<div class="a" style="left:186.5px;top:340.69px;font-size:26px;line-height:1;white-space:pre;color:#b1b8ba;font-weight:400;">platform-arrow.glb</div>
<div class="ln" style="left:120.4px;top:395.7px;width:32px;height:4px;background:#2f3b3f"></div>
<svg class="a" style="left:151.9px;top:389.7px" width="22" height="18" viewBox="0 0 22 18"><path d="M0,0 H8 L9.5,3 H21.3 V17.3 H0Z" fill="#5b7073"/></svg>
<div class="a" style="left:186.5px;top:385.69px;font-size:26px;line-height:1;white-space:pre;color:#b1b8ba;font-weight:400;">platform-square.glb</div>
<div class="ln" style="left:120.4px;top:440.7px;width:32px;height:4px;background:#2f3b3f"></div>
<svg class="a" style="left:151.9px;top:434.7px" width="22" height="18" viewBox="0 0 22 18"><path d="M0,0 H8 L9.5,3 H21.3 V17.3 H0Z" fill="#5b7073"/></svg>
<div class="a" style="left:186.5px;top:430.69px;font-size:26px;line-height:1;white-space:pre;color:#b1b8ba;font-weight:400;">test_FacingObjects.glb</div>
<div class="ln" style="left:120.4px;top:485.7px;width:32px;height:4px;background:#2f3b3f"></div>
<svg class="a" style="left:151.9px;top:479.7px" width="22" height="18" viewBox="0 0 22 18"><path d="M0,0 H8 L9.5,3 H21.3 V17.3 H0Z" fill="#ff6600"/></svg>
<div class="a" style="left:186.5px;top:475.69px;font-size:26px;line-height:1;white-space:pre;color:#ff6600;font-weight:400;">Tree.glb</div>
<div class="a" style="left:666px;top:62px;width:1.5px;height:460px;background:#20292b"></div>
<div class="a" style="left:667px;top:113px;width:498px;height:1px;background:#20292b"></div>
<div class="a" style="left:677.5px;top:78.51px;font-size:23.5px;line-height:1;white-space:pre;color:#fff;font-weight:400;">Name</div>
<svg class="a" style="left:756px;top:76px" width="17" height="19" viewBox="0 0 17 19"><polygon points="8.3,1 15,8.5 11,8.5 11,18 5.6,18 5.6,8.5 1.6,8.5" fill="#fff"/></svg>
<div class="a" style="left:719px;top:126.56px;font-size:23.2px;line-height:1;white-space:pre;color:#b1b8ba;font-weight:400;">Tree</div>
<div class="a" style="left:719px;top:171.56px;font-size:23.2px;line-height:1;white-space:pre;color:#b1b8ba;font-weight:400;">Tree</div>
<div class="a" style="left:719px;top:216.56px;font-size:23.2px;line-height:1;white-space:pre;color:#b1b8ba;font-weight:400;">Tree.glb</div>
<div class="a" style="left:719px;top:261.56px;font-size:23.2px;line-height:1;white-space:pre;color:#b1b8ba;font-weight:400;">Tree.glb</div>
<svg class="a" style="left:684px;top:120px" width="16" height="32" viewBox="0 0 16 32"><path d="M2,2 H14 L11.9,4.9 V30.3 H4.1 V4.9Z" fill="#fff"/></svg>
<svg class="a" style="left:678px;top:169px" width="28" height="28" viewBox="0 0 28 28"><polygon points="13.6,2.2 24.6,13.2 13.6,24.2 2.6,13.2" fill="#5b7073"/><polygon points="13.6,8 19.8,13.2 13.6,18.4 7.4,13.2" fill="#29353a"/></svg>
<svg class="a" style="left:678px;top:210px" width="28" height="30" viewBox="0 0 28 30"><polygon points="14,1.8 26,7.6 14,13.2 2,7.6" fill="#5b7073"/><polygon points="2,9 13,14.4 13,28.8 2,23.5" fill="#5b7073"/><polygon points="15,14.4 26,9 26,23.5 15,28.8" fill="#5b7073"/></svg>
<svg class="a" style="left:679px;top:255px" width="26" height="28" viewBox="0 0 26 28"><path d="M12.6,2.3 L2.8,7.5 V19.3 L12.6,24.5 L23,19.3 V7.5Z M2.8,7.5 L13,12.3 L23,7.5 M13,12.3 V24.5 M7.8,10.4 L17.6,5.5 M7.8,10.4 V16.8" fill="none" stroke="#5b7073" stroke-width="1.7" stroke-linejoin="round"/></svg>
</div>
</body></html>
